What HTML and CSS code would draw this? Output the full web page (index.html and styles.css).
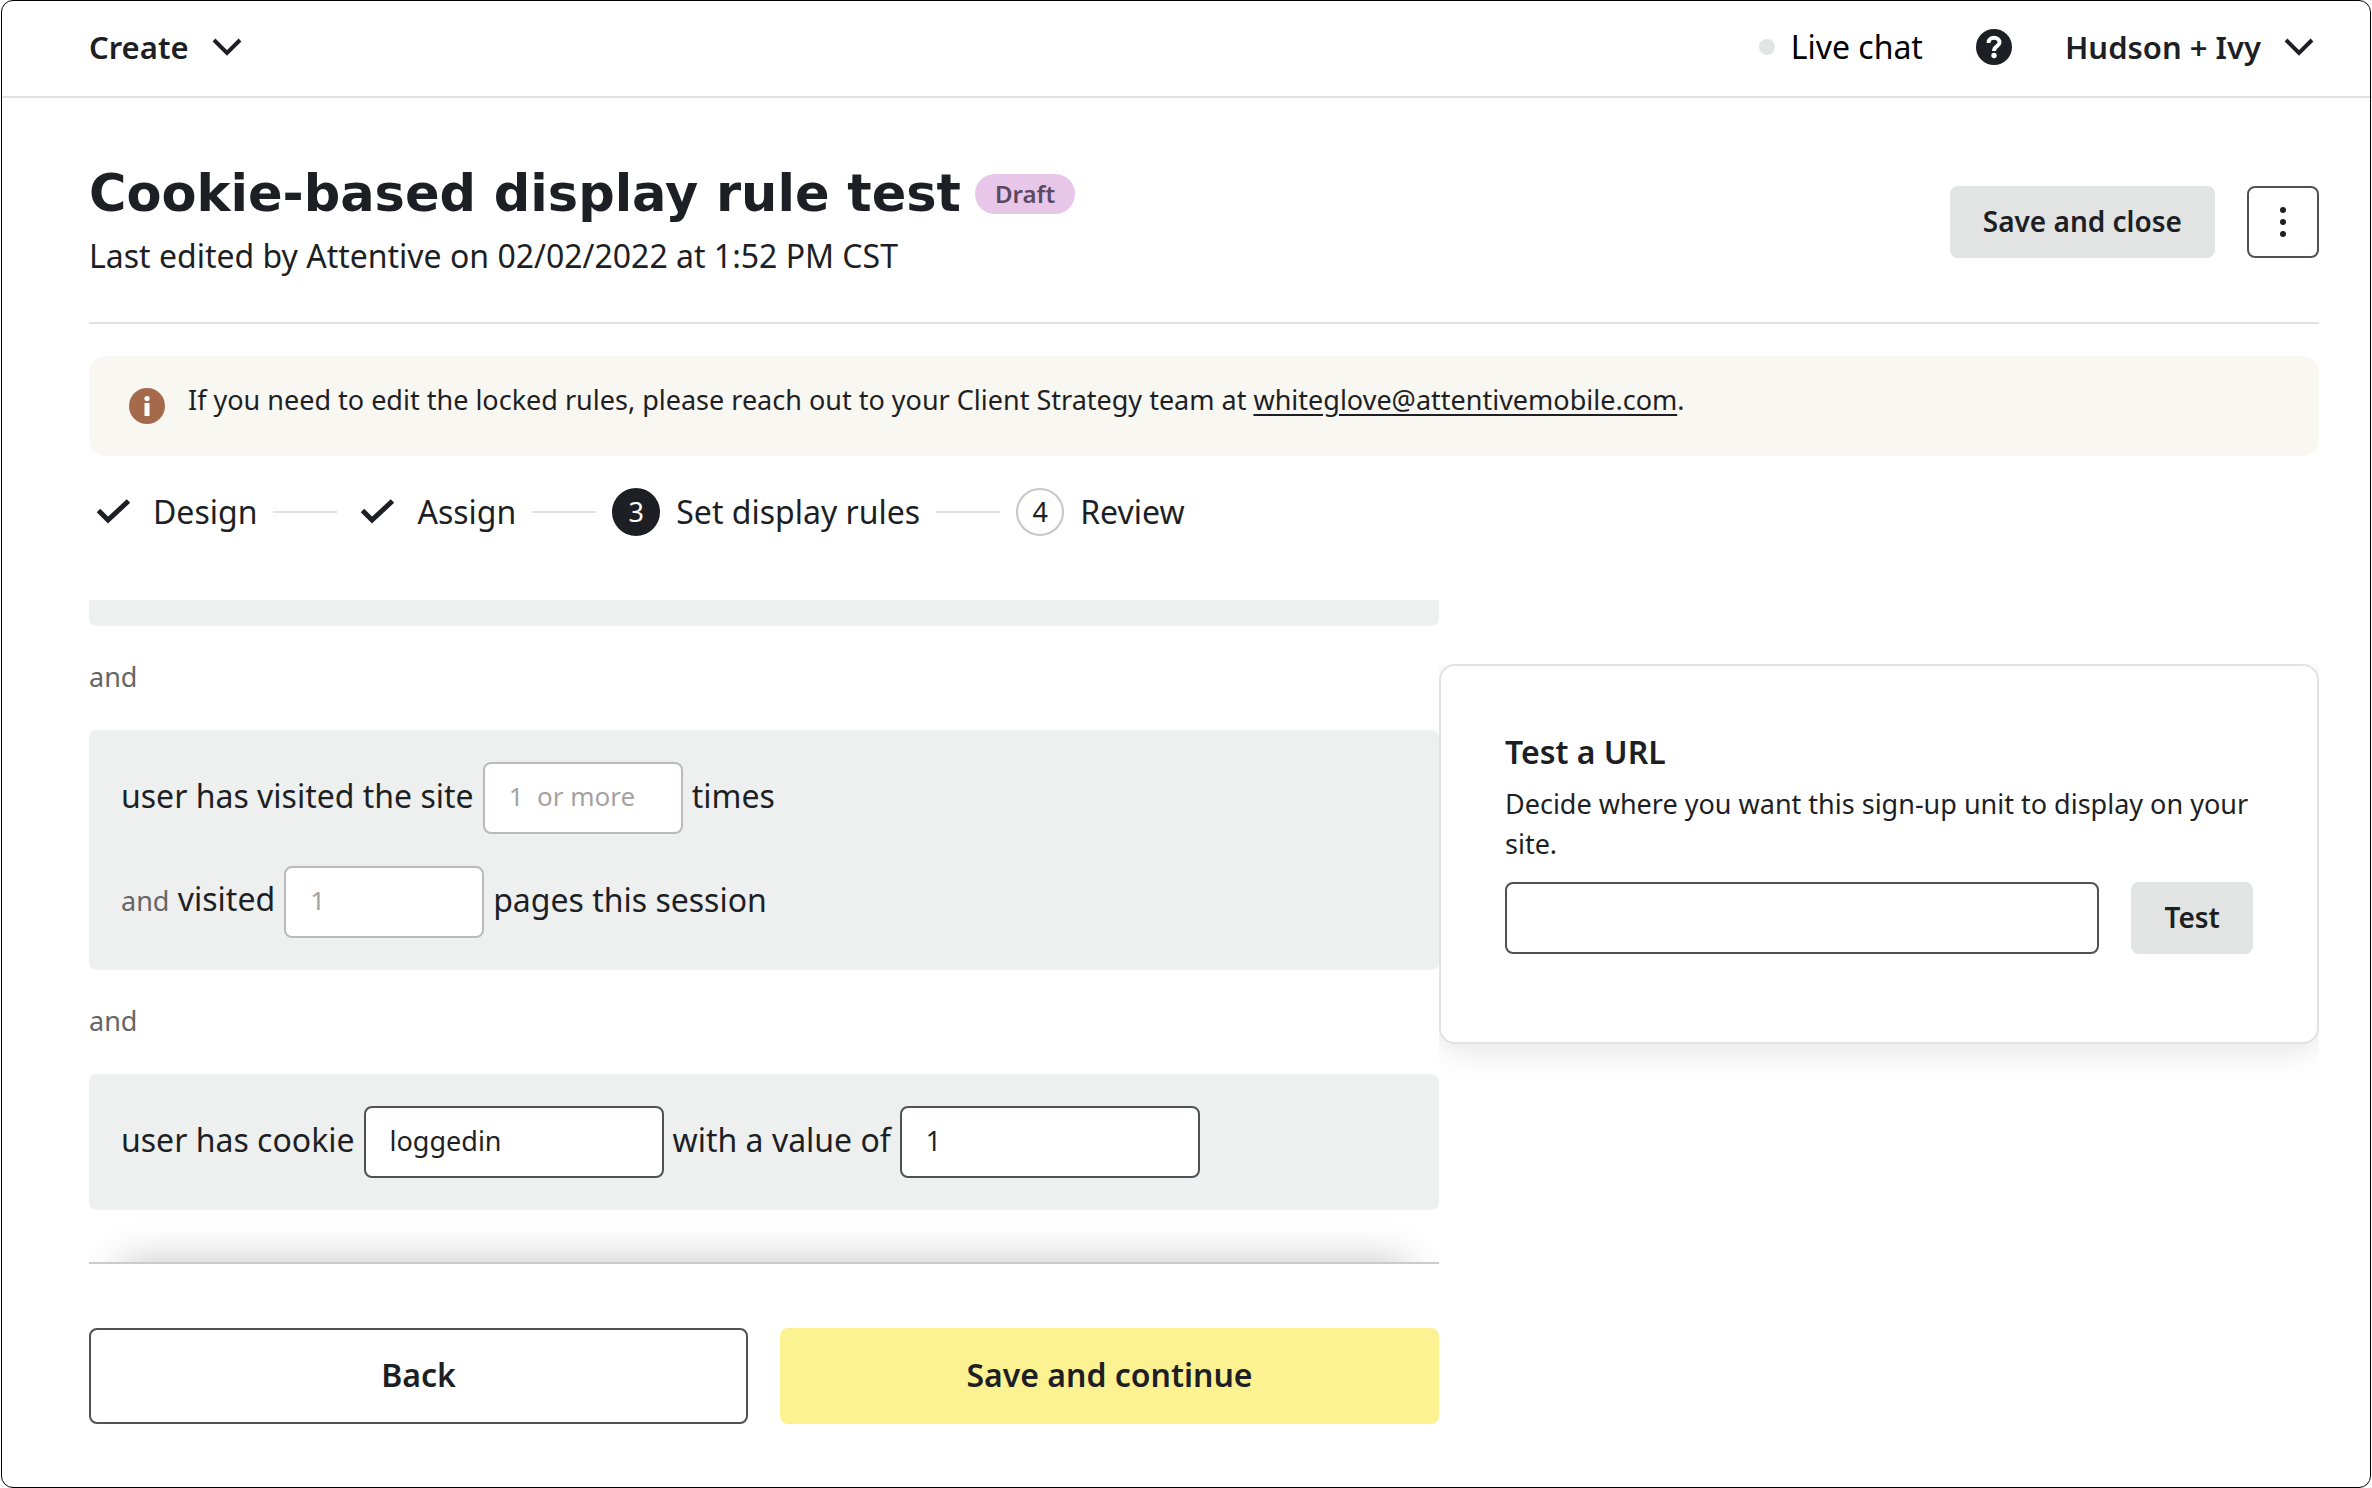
FILE: index.html
```html
<!DOCTYPE html>
<html lang="en">
<head>
  <meta charset="UTF-8">
  <title>Cookie-based display rule test</title>
  <link rel="stylesheet" href="styles.css">
</head>
<body>
<div class="window">

  <header class="topbar">
    <button type="button" class="menu-btn">
      Create
      <svg class="chevron" viewBox="0 0 30 18"><path d="M2 2l13 13L28 2"/></svg>
    </button>
    <div class="topbar-right">
      <a href="#chat" class="live-chat"><span class="dot"></span>Live chat</a>
      <button type="button" class="help" aria-label="Help">
        <svg viewBox="0 0 36 36">
          <circle cx="18" cy="18" r="18" fill="#1d1f24"/>
          <path d="M12.500 14c0-3.500 2.500-5.200 5.500-5.200s5.500 1.700 5.500 4.700c0 4-5.500 3.500-5.500 8.500" fill="none" stroke="#fff" stroke-width="4"/>
          <circle cx="18" cy="26.500" r="2.700" fill="#fff"/>
        </svg>
      </button>
      <button type="button" class="menu-btn">
        Hudson + Ivy
        <svg class="chevron" viewBox="0 0 30 18"><path d="M2 2l13 13L28 2"/></svg>
      </button>
    </div>
  </header>

  <main class="page">
    <div class="page-head">
      <div>
        <div class="title-row">
          <h1>Cookie-based display rule test</h1>
          <span class="badge">Draft</span>
        </div>
        <p class="edited">Last edited by Attentive on 02/02/2022 at 1:52 PM CST</p>
      </div>
      <div class="head-actions">
        <button type="button" class="btn btn-grey">Save and close</button>
        <button type="button" class="btn btn-more" aria-label="More">
          <svg viewBox="0 0 6 30"><circle cx="3" cy="3" r="3"/><circle cx="3" cy="15" r="3"/><circle cx="3" cy="27" r="3"/></svg>
        </button>
      </div>
    </div>

    <div class="banner">
      <svg viewBox="0 0 36 36">
        <circle cx="18" cy="18" r="18" fill="#a56a4b"/>
        <circle cx="18" cy="10.500" r="2.600" fill="#fff"/>
        <rect x="15.500" y="15" width="5" height="13" fill="#fff"/>
      </svg>
      <p>If you need to edit the locked rules, please reach out to your Client Strategy team at <a href="mailto:whiteglove@attentivemobile.com">whiteglove@attentivemobile.com</a>.</p>
    </div>

    <ol class="steps">
      <li><svg class="check" viewBox="0 0 48 48"><path d="M9.500 22.500l9.500 9.500L39.500 13"/></svg>Design</li>
      <li><svg class="check" viewBox="0 0 48 48"><path d="M9.500 22.500l9.500 9.500L39.500 13"/></svg>Assign</li>
      <li><span class="num current">3</span>Set display rules</li>
      <li><span class="num">4</span>Review</li>
    </ol>

    <div class="columns">
      <form class="rules">
        <div class="rule rule-cut"></div>
        <p class="and">and</p>
        <div class="rule">
          <div class="rule-line">
            <label for="visits">user has visited the site</label>
            <input type="text" id="visits" class="short" placeholder="1  or more">
            <span>times</span>
          </div>
          <div class="rule-line">
            <label for="pages"><span class="muted">and</span> visited</label>
            <input type="text" id="pages" class="short" placeholder="1">
            <span>pages this session</span>
          </div>
        </div>
        <p class="and">and</p>
        <div class="rule">
          <div class="rule-line">
            <label for="cookie">user has cookie</label>
            <input type="text" id="cookie" value="loggedin">
            <label for="value">with a value of</label>
            <input type="text" id="value" value="1">
          </div>
        </div>
        <div class="scroll-shadow"></div>
        <div class="form-foot">
          <button type="button" class="btn btn-big btn-line">Back</button>
          <button type="submit" class="btn btn-big btn-yellow">Save and continue</button>
        </div>
      </form>

      <aside class="test-wrap">
        <form class="test-card">
          <h2>Test a URL</h2>
          <label for="url">Decide where you want this sign-up unit to display on your site.</label>
          <div class="test-row">
            <input type="text" id="url">
            <button type="button" class="btn btn-grey">Test</button>
          </div>
        </form>
      </aside>
    </div>
  </main>

</div>
</body>
</html>
```
FILE: styles.css
```css
* {
  box-sizing: border-box;
}
body {
  margin: 0 1px;
  background: #fff;
  color: #1d1f24;
  font-family: "Noto Sans", "Open Sans", sans-serif;
  font-size: 32px;
  line-height: 48px;
}
h1, h2, p, ol {
  margin: 0;
  padding: 0;
}
button, input {
  font-family: inherit;
  color: inherit;
}
button {
  padding: 0;
  border: 0;
  background: none;
  cursor: pointer;
}
svg {
  display: block;
  flex: none;
}

.window {
  min-height: 100vh;
  border: 1px solid #000;
  border-radius: 12px;
}

/* top bar */
.topbar {
  display: flex;
  justify-content: space-between;
  align-items: center;
  height: 97px;
  padding: 0 56px 3px 87px;
  border-bottom: 2px solid #e2e2e2;
}
.topbar-right {
  display: flex;
  align-items: center;
  gap: 53px;
}
.menu-btn {
  display: flex;
  align-items: center;
  gap: 23px;
  font-size: 31px;
  line-height: 48px;
  font-weight: 600;
}
.chevron {
  width: 30px;
  height: 18px;
  fill: none;
  stroke: #1d1f24;
  stroke-width: 4;
}
.live-chat {
  display: flex;
  align-items: center;
  gap: 16px;
  color: #000;
  text-decoration: none;
}
.dot {
  width: 16px;
  height: 16px;
  border-radius: 50%;
  background: #e2e4e3;
}
.help svg {
  width: 36px;
  height: 36px;
}

/* page heading */
.page {
  padding: 62px 51px 62px 87px;
}
.page-head {
  display: flex;
  justify-content: space-between;
  align-items: flex-start;
  padding-bottom: 38px;
  border-bottom: 2px solid #e2e2e2;
}
.title-row {
  display: flex;
  align-items: center;
  gap: 14px;
}
h1 {
  font-family: "DejaVu Sans", sans-serif;
  font-size: 51px;
  line-height: 68px;
  font-weight: bold;
}
.badge {
  padding: 0 20px;
  border-radius: 20px;
  background: #e8c6ea;
  color: #5a4a60;
  font-size: 24px;
  line-height: 40px;
  font-weight: 600;
}
.edited {
  line-height: 56px;
}
.head-actions {
  display: flex;
  gap: 32px;
  padding-top: 26px;
}

.btn {
  height: 72px;
  padding: 0 33px 3px;
  border-radius: 8px;
  font-size: 28px;
  font-weight: 600;
}
.btn-grey {
  background: #e2e4e3;
}
.btn-more {
  display: flex;
  align-items: center;
  justify-content: center;
  width: 72px;
  padding: 0;
  border: 2px solid #505154;
}
.btn-more svg {
  width: 6px;
  height: 30px;
  fill: #1d1f24;
}

/* info banner */
.banner {
  display: flex;
  gap: 23px;
  margin-top: 32px;
  padding: 24px 40px 32px;
  border-radius: 16px;
  background: #f9f7f1;
  font-size: 27px;
  line-height: 40px;
}
.banner svg {
  width: 36px;
  height: 36px;
  margin-top: 8px;
}
.banner a {
  color: inherit;
  text-underline-offset: 4px;
}

/* steps */
.steps {
  display: flex;
  margin-top: 32px;
  list-style: none;
}
.steps li {
  display: flex;
  align-items: center;
  gap: 16px;
}
.steps li + li::before {
  content: "";
  width: 64px;
  height: 2px;
  margin-left: 16px;
  background: #e2e2e2;
}
.check {
  width: 48px;
  height: 48px;
  fill: none;
  stroke: #1d1f24;
  stroke-width: 5;
}
.num {
  width: 48px;
  height: 48px;
  border: 2px solid #c6c6c6;
  border-radius: 50%;
  font-size: 27px;
  line-height: 44px;
  text-align: center;
}
.num.current {
  border-color: #1d1f24;
  background: #1d1f24;
  color: #fff;
}

/* rules */
.columns {
  display: grid;
  grid-template-columns: 135fr 88fr;
  align-items: start;
  margin-top: 64px;
}
.rule {
  display: flex;
  flex-direction: column;
  gap: 32px;
  padding: 32px;
  border-radius: 8px;
  background: #eef0ef;
}
.rule-cut {
  height: 26px;
  padding: 0;
  border-radius: 0 0 8px 8px;
}
.rule-line {
  display: flex;
  align-items: center;
  gap: 9px;
}
.rule-line label,
.rule-line > span {
  padding-bottom: 4px;
}
.and, .muted {
  color: #666;
  font-size: 27px;
}
.and {
  padding: 27px 0 29px;
}
input {
  width: 300px;
  height: 72px;
  padding: 0 24px 4px;
  border: 2px solid #505154;
  border-radius: 8px;
  background: #fff;
  font-size: 27px;
}
input.short {
  width: 200px;
  border-color: #bababa;
  font-size: 26px;
}
input::placeholder {
  color: #a3a3a3;
  white-space: pre;
}

/* shadow of the footer over the scrolled list */
.scroll-shadow {
  height: 54px;
  overflow: hidden;
  border-bottom: 2px solid #cbcbcb;
}
.scroll-shadow::after {
  content: "";
  display: block;
  height: 60px;
  margin: 52px 32px 0;
  box-shadow: 0 0 40px rgba(0, 0, 0, 0.24);
}
.form-foot {
  display: grid;
  grid-template-columns: 1fr 1fr;
  gap: 32px;
  padding-top: 64px;
}
.btn-big {
  height: 96px;
  font-size: 32px;
}
.btn-line {
  border: 2px solid #505154;
}
.btn-yellow {
  background: #fdf291;
}

/* test a url card */
.test-wrap {
  margin-top: 64px;
  padding-bottom: 48px;
  overflow: hidden;
}
.test-card {
  padding: 62px 64px 88px;
  border: 2px solid #e2e2e2;
  border-radius: 16px;
  background: #fff;
  box-shadow: 0 8px 32px rgba(0, 0, 0, 0.1);
}
.test-card h2 {
  font-size: 32px;
  line-height: 48px;
  font-weight: 600;
}
.test-card label {
  display: block;
  padding: 8px 0 18px;
  font-size: 27px;
  line-height: 40px;
}
.test-row {
  display: flex;
  gap: 32px;
}
.test-row input {
  flex: 1;
  min-width: 0;
}
```
